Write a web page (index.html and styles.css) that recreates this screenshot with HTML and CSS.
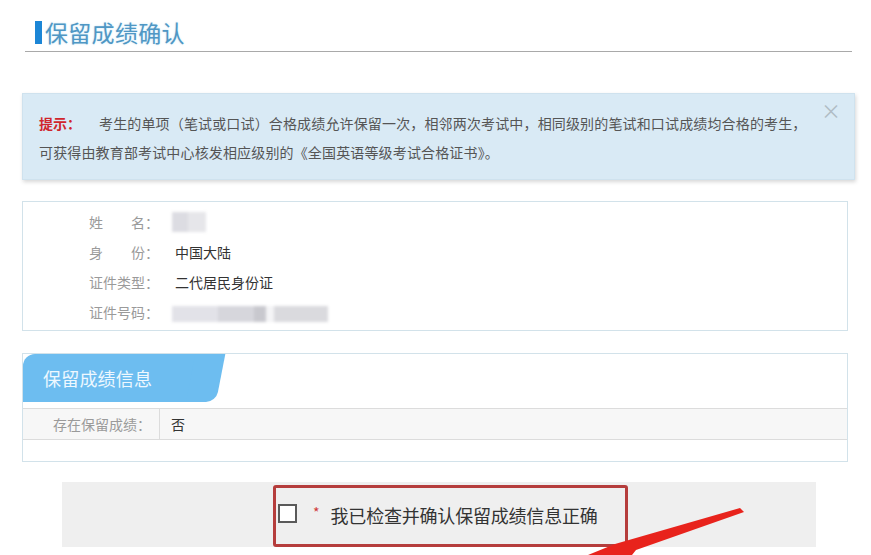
FILE: index.html
```html
<!DOCTYPE html>
<html lang="zh-CN">
<head>
<meta charset="utf-8">
<title>保留成绩确认</title>
<link rel="stylesheet" href="styles.css">
</head>
<body>
<div class="page">
  <div class="header">
    <span class="header-bar"></span>
    <h1 class="header-title">保留成绩确认</h1>
  </div>

  <div class="alert">
    <span class="alert-label">提示：</span><span class="alert-text">考生的单项（笔试或口试）合格成绩允许保留一次，相邻两次考试中，相同级别的笔试和口试成绩均合格的考生，<br>可获得由教育部考试中心核发相应级别的《全国英语等级考试合格证书》。</span>
    <span class="alert-close">×</span>
  </div>

  <div class="info">
    <div class="info-row">
      <span class="info-label">姓　　名：</span>
      <span class="blur blur-name"><i class="b1"></i><i class="b2"></i></span>
    </div>
    <div class="info-row">
      <span class="info-label">身　　份：</span>
      <span class="info-value">中国大陆</span>
    </div>
    <div class="info-row">
      <span class="info-label">证件类型：</span>
      <span class="info-value">二代居民身份证</span>
    </div>
    <div class="info-row">
      <span class="info-label">证件号码：</span>
      <span class="blur blur-id"><i class="b1"></i><i class="b2"></i><i class="b3"></i><i class="b4"></i><i class="b5"></i></span>
    </div>
  </div>

  <div class="section">
    <div class="tab"><span class="tab-text">保留成绩信息</span></div>
    <div class="table-row">
      <div class="cell-label">存在保留成绩：</div>
      <div class="cell-value">否</div>
    </div>
  </div>

  <div class="confirm-bar">
    <div class="confirm-box">
      <span class="checkbox"></span>
      <span class="star">*</span>
      <span class="confirm-text">我已检查并确认保留成绩信息正确</span>
    </div>
  </div>
</div>

<svg class="arrow" width="871" height="555" viewBox="0 0 871 555">
  <polygon points="740,508 744,512 636,550 632,555 588,555 615,544" fill="#e8231c"/>
</svg>
</body>
</html>
```

FILE: styles.css
```css
html, body {
  margin: 0;
  padding: 0;
  background: #ffffff;
}

body {
  font-family: "Noto Sans CJK SC", "Noto Sans", "Liberation Sans", sans-serif;
  color: #333333;
  width: 871px;
  height: 555px;
  overflow: hidden;
  position: relative;
}

.page {
  padding-left: 22px;
}

.header {
  margin-left: 3px;
  width: 827px;
  padding: 21px 0 7px 10px;
  box-sizing: border-box;
  display: flex;
  align-items: center;
  border-bottom: 1px solid #a9a9a9;
}

.header-bar {
  width: 7px;
  height: 23px;
  background: #1c86d6;
  margin-right: 3px;
}

.header-title {
  margin: 0;
  font-size: 23px;
  line-height: 23px;
  font-weight: normal;
  color: #4f97c4;
  letter-spacing: 0.3px;
  text-shadow: 0 0 2px rgba(120, 190, 230, 0.45);
}

.alert {
  position: relative;
  margin-top: 41px;
  width: 833px;
  height: 87px;
  box-sizing: border-box;
  padding: 15px 0 0 16px;
  background: #d9eaf5;
  border: 1px solid #cfe2ee;
  box-shadow: 1px 2px 4px rgba(0, 0, 0, 0.16);
  font-size: 14px;
  line-height: 29px;
  color: #555555;
}

.alert-label {
  color: #d0262c;
  font-weight: bold;
  margin-right: 18px;
}

.alert-text {
  letter-spacing: 0.15px;
}

.alert-close {
  position: absolute;
  right: 13px;
  top: 4px;
  font-size: 20px;
  line-height: 26px;
  color: #b0bcc4;
}

.info {
  margin-top: 21px;
  width: 826px;
  height: 130px;
  box-sizing: border-box;
  border: 1px solid #d2e2ea;
  padding: 5px 0 0 66px;
}

.info-row {
  height: 30px;
  display: flex;
  align-items: center;
  font-size: 14px;
}

.info-label {
  color: #9a9a9a;
  width: 86px;
  flex: none;
}

.info-value {
  color: #333333;
}

.blur {
  display: flex;
  filter: blur(1.5px);
}

.blur i {
  display: block;
}

.blur-name {
  height: 20px;
  margin-left: -3px;
}

.blur-name .b1 { width: 16px; background: #dcdce2; }
.blur-name .b2 { width: 18px; background: #e6e6ea; }

.blur-id {
  height: 16px;
  margin-left: -3px;
  margin-top: 3px;
}

.blur-id .b1 { width: 46px; background: #e2e2e8; }
.blur-id .b2 { width: 36px; background: #d6d6dc; }
.blur-id .b3 { width: 12px; background: #c8c8ce; }
.blur-id .b4 { width: 8px; background: #f4f4f6; }
.blur-id .b5 { width: 54px; background: #dadade; }

.section {
  margin-top: 22px;
  width: 826px;
  height: 109px;
  box-sizing: border-box;
  border: 1px solid #d2e2ea;
}

.tab {
  position: relative;
  width: 180px;
  height: 48px;
  background: #6dbdf0;
  border-top-left-radius: 12px;
  display: flex;
  align-items: center;
}

.tab::after {
  content: "";
  position: absolute;
  top: 0;
  right: -13px;
  width: 30px;
  height: 48px;
  background: #6dbdf0;
  transform: skewX(-11deg);
  transform-origin: bottom left;
  border-bottom-right-radius: 10px;
}

.tab-text {
  position: relative;
  z-index: 1;
  margin-left: 20px;
  font-size: 18px;
  color: #eef8ff;
  letter-spacing: 0.2px;
}

.table-row {
  margin-top: 6px;
  height: 32px;
  box-sizing: border-box;
  border-top: 1px solid #dcdcdc;
  border-bottom: 1px solid #dcdcdc;
  background: #f7f7f7;
  display: flex;
  align-items: stretch;
  font-size: 14px;
}

.cell-label {
  width: 137px;
  box-sizing: border-box;
  padding-right: 8px;
  text-align: right;
  color: #9a9a9a;
  border-right: 1px solid #dcdcdc;
  display: flex;
  align-items: center;
  justify-content: flex-end;
}

.cell-value {
  padding-left: 11px;
  display: flex;
  align-items: center;
  color: #333333;
}

.confirm-bar {
  margin-top: 20px;
  margin-left: 40px;
  width: 754px;
  height: 65px;
  background: #efefef;
  display: flex;
}

.confirm-box {
  margin-left: 211px;
  margin-top: 3px;
  width: 355px;
  height: 62px;
  box-sizing: border-box;
  border: 3px solid #b53d3c;
  border-radius: 3px;
  display: flex;
  align-items: center;
  padding-left: 2px;
  padding-bottom: 6px;
}

.checkbox {
  width: 19px;
  height: 19px;
  box-sizing: border-box;
  border: 2px solid #5a5a5a;
  background: #ffffff;
  flex: none;
}

.star {
  color: #d03a3a;
  font-size: 14px;
  margin-left: 16px;
  margin-right: 11px;
  margin-top: -2px;
}

.confirm-text {
  font-size: 18px;
  color: #333333;
  letter-spacing: -0.2px;
  margin-top: 3px;
}

.arrow {
  position: absolute;
  left: 0;
  top: 0;
  pointer-events: none;
}
```
